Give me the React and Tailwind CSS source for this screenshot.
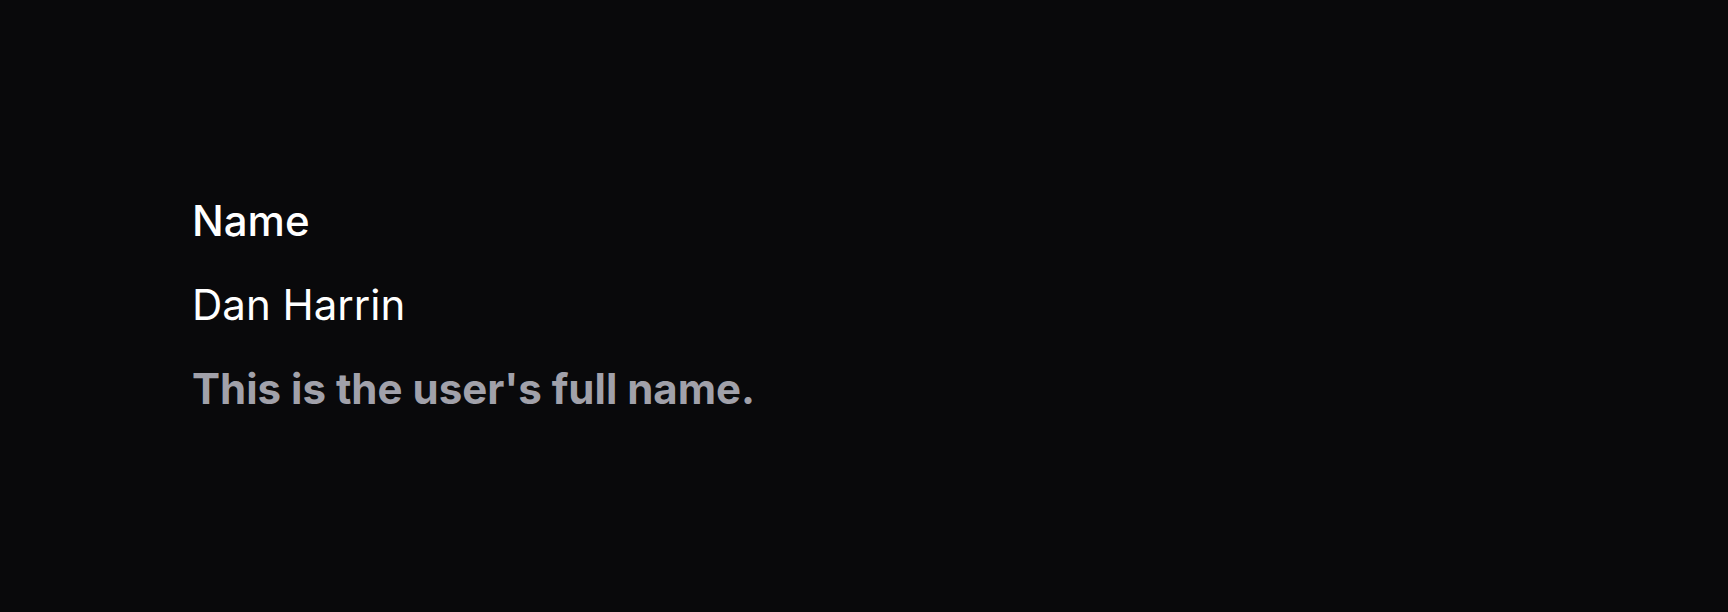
export default function App() {
  return (
    <div
      className="min-h-[612px] w-full bg-[#09090b] pt-[191px] pl-[192px]"
      style={{ fontFamily: 'Inter, "Liberation Sans", sans-serif' }}
    >
      <div className="flex flex-col gap-[24px] text-[42px] leading-[60px]">
        <p className="font-medium text-white">Name</p>
        <p className="text-white">Dan Harrin</p>
        <p className="font-bold text-[#a1a1aa]">This is the user's full name.</p>
      </div>
    </div>
  );
}
